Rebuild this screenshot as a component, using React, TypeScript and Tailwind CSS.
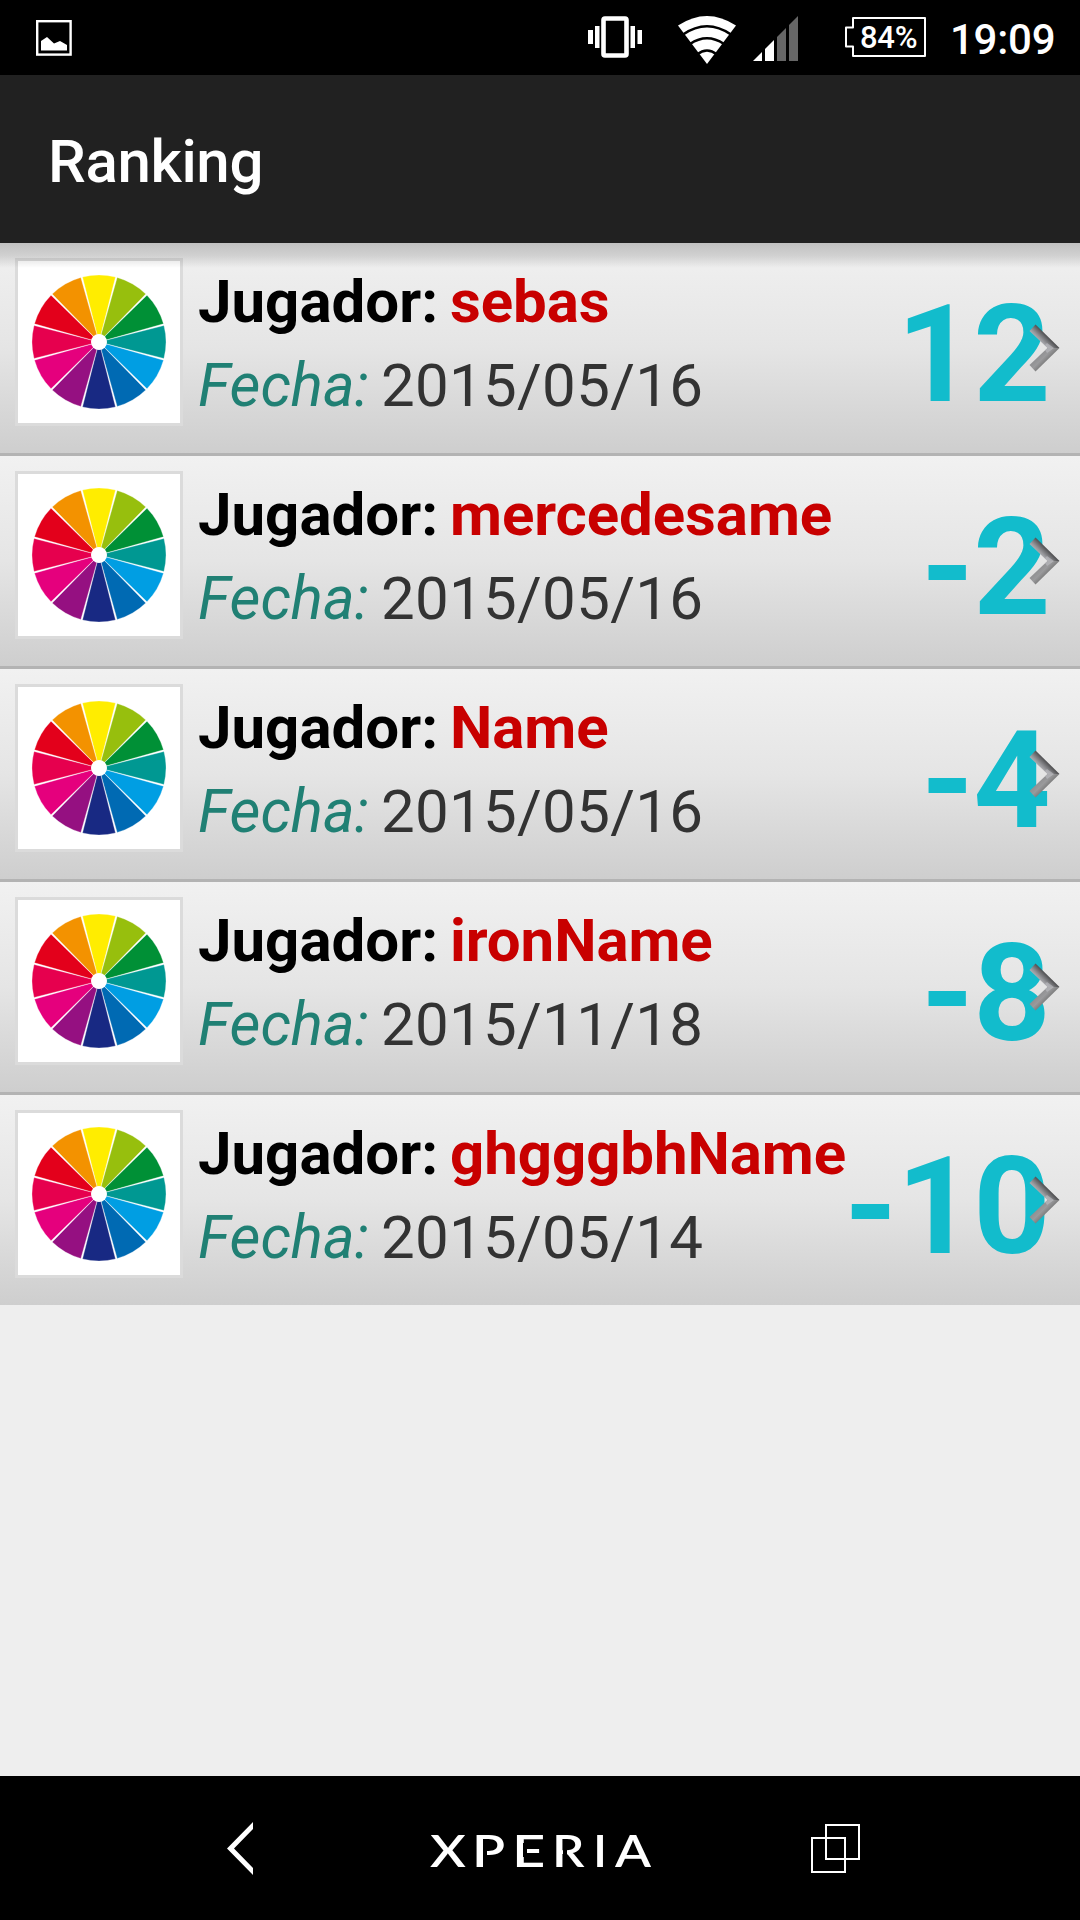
const wheelColors = [
  '#ffed00', '#97bf0d', '#009036', '#009892', '#009ee3', '#006ab3',
  '#182983', '#951081', '#e5007d', '#e6004e', '#e3001b', '#f39200',
];

const players = [
  { name: 'sebas', date: '2015/05/16', score: '12' },
  { name: 'mercedesame', date: '2015/05/16', score: '-2' },
  { name: 'Name', date: '2015/05/16', score: '-4' },
  { name: 'ironName', date: '2015/11/18', score: '-8' },
  { name: 'ghgggbhName', date: '2015/05/14', score: '-10' },
];

function wedge(i: number) {
  const r = 67;
  const a = ((i * 30 - 14.25) * Math.PI) / 180;
  const b = ((i * 30 + 14.25) * Math.PI) / 180;
  return `M0 0L${r * Math.sin(a)} ${-r * Math.cos(a)}A${r} ${r} 0 0 1 ${r * Math.sin(b)} ${-r * Math.cos(b)}Z`;
}

function Wheel() {
  return (
    <svg viewBox="-81 -81 162 162" className="size-full">
      {wheelColors.map((c, i) => (
        <path key={c} d={wedge(i)} fill={c} stroke="#fff" strokeWidth="0.3" />
      ))}
      <circle r="8" fill="#fff" />
    </svg>
  );
}

function Chevron() {
  return (
    <svg width="32" height="50" viewBox="0 0 32 50" className="absolute top-[80px] left-[1028px] blur-[0.6px]">
      <defs>
        <linearGradient id="up" x1="10" y1="20" x2="18" y2="12" gradientUnits="userSpaceOnUse">
          <stop offset="0" stopColor="#c4c4c8" />
          <stop offset="0.45" stopColor="#96969a" />
          <stop offset="1" stopColor="#505052" />
        </linearGradient>
        <linearGradient id="down" x1="12" y1="30" x2="20" y2="38" gradientUnits="userSpaceOnUse">
          <stop offset="0" stopColor="#8e8e90" />
          <stop offset="0.5" stopColor="#9a9a9c" />
          <stop offset="1" stopColor="#777" />
        </linearGradient>
      </defs>
      <path d="M7.500 1.500L31.500 25H19.500L1.500 8Z" fill="url(#up)" />
      <path d="M19.500 25H31.500L7.500 48.500L1.500 42Z" fill="url(#down)" />
      <path d="M19 20L26 25L19 30L17 27L20 25L17 22Z" fill="#c0c0c4" opacity="0.6" />
    </svg>
  );
}

function StatusBar() {
  return (
    <div className="flex h-[75px] bg-black pl-9">
      <svg width="36" height="36" viewBox="0 0 36 36" className="mt-5">
        <rect x="1.2" y="1.2" width="33.4" height="33.4" fill="none" stroke="#fff" strokeWidth="2.4" />
        <path d="M5 30.500V21L11 17L18 23.500L24 21L31 25V30.500Z" fill="#fff" />
      </svg>
      <svg width="54" height="44" viewBox="0 0 54 44" className="mt-[15px] ml-[516px]" fill="#fff">
        <rect x="0" y="15" width="5" height="14" />
        <rect x="7" y="11" width="4.500" height="22" />
        <rect x="15.500" y="3.500" width="23" height="37" rx="1.500" fill="none" stroke="#fff" strokeWidth="4.600" />
        <rect x="42.500" y="11" width="4.500" height="22" />
        <rect x="49.500" y="15" width="4.500" height="14" />
      </svg>
      <svg width="58" height="48" viewBox="0 0 58 48" className="mt-4 ml-9">
        <path d="M29 48L0 9.500Q29 -9.500 58 9.500Z" fill="#fff" />
        <g fill="none" stroke="#000" strokeWidth="2.600">
          <path d="M5 18.500Q29 2 53 18.500" />
          <path d="M12 28Q29 16.500 46 28" />
          <path d="M19 38.500Q29 30.500 39 38.500" />
        </g>
      </svg>
      <svg width="45" height="45" viewBox="0 0 45 45" className="mt-4 ml-[17px]">
        <path d="M0 45L9 36V45Z" fill="#fff" />
        <path d="M12 33L21 24V45H12Z" fill="#fff" />
        <path d="M24 21L33 12V45H24Z" fill="#666" />
        <path d="M36 9L45 0V45H36Z" fill="#666" />
      </svg>
      <div className="relative mt-[17px] ml-[47px] h-10 w-[81px]">
        <svg width="81" height="40" viewBox="0 0 81 40" className="absolute inset-0">
          <path d="M8 1H80V39H8V29.500H1V10.500H8Z" fill="none" stroke="#fff" strokeWidth="2" strokeLinejoin="round" />
        </svg>
        <span className="absolute top-[3px] left-[15px] text-[31px] leading-9 font-medium tracking-[-0.3px] text-white">84%</span>
      </div>
      <span className="mt-[15px] ml-[24px] text-[42px] leading-[50px] font-medium tracking-[-0.25px] text-white">19:09</span>
    </div>
  );
}

const glyph = "block w-max origin-left font-['Lato',sans-serif] text-[44.500px] leading-[48px] font-semibold text-white";

function Wordmark() {
  return (
    <div className="mt-[50px] ml-[177px] flex h-[48px] w-[221px]">
      <div className="w-[47px] shrink-0">
        <span className={`${glyph} scale-x-[1.22]`}>X</span>
      </div>
      <div className="relative w-[40px] shrink-0">
        <span className={`${glyph} -ml-[5px] scale-x-[1.22]`}>P</span>
        <i className="absolute top-[18px] left-[6px] h-[18px] w-[4px] bg-black" />
      </div>
      <div className="relative w-[40px] shrink-0">
        <span className={`${glyph} -ml-[5px] scale-x-[1.3]`}>E</span>
        <i className="absolute top-[17px] left-[6px] h-[14px] w-[4px] bg-black" />
      </div>
      <div className="relative w-[41px] shrink-0">
        <span className={`${glyph} -ml-[5px] scale-x-[1.15]`}>R</span>
        <i className="absolute top-[18px] left-[6px] h-[18px] w-[4px] bg-black" />
      </div>
      <div className="w-[17px] shrink-0">
        <span className={`${glyph} -ml-[5px] scale-x-[1.1]`}>I</span>
      </div>
      <div className="w-[36px] shrink-0">
        <span className={`${glyph} scale-x-[1.18]`}>A</span>
      </div>
    </div>
  );
}

function NavBar() {
  return (
    <div className="flex h-[144px] bg-black">
      <svg width="26" height="54" viewBox="0 0 26 54" className="mt-[45px] ml-[227px]">
        <path d="M26 1V8L7 27.500L26 47V54L0 27.500Z" fill="#fff" />
      </svg>
      <Wordmark />
      <svg width="50" height="50" viewBox="0 0 50 50" className="mt-12 ml-[160px]" fill="none" stroke="#fff" strokeWidth="2">
        <rect x="15" y="1" width="33" height="34" />
        <rect x="1" y="14" width="33" height="34" />
      </svg>
    </div>
  );
}

export default function App() {
  return (
    <div className="flex h-[1920px] w-[1080px] flex-col overflow-hidden bg-[#eee] font-['Roboto',sans-serif]">
      <StatusBar />
      <header className="flex h-[168px] items-center bg-[#212121] pt-[5px] pl-12">
        <h1 className="text-[60px] leading-[70px] font-medium tracking-[-0.35px] text-white">Ranking</h1>
      </header>
      <main className="relative flex-1">
        <ul className="divide-y-[3px] divide-[#b3b3b3]">
          {players.map((p, i) => (
            <li key={i} className="relative h-[213px] bg-linear-to-b from-[#f1f1f1] via-[#e5e5e5] to-[#cecece] last:h-[210px]">
              <div className="flex pt-[15px] pl-[15px]">
                <div className="size-[168px] border-[3px] border-[#dbdbdb] bg-white">
                  <Wheel />
                </div>
                <div className="ml-[15px] pt-2 text-[60px] leading-[72px]">
                  <div className="flex font-bold">
                    <span className="text-black">Jugador:</span>
                    <span className="ml-3 tracking-[-0.08px] text-[#c80000]">{p.name}</span>
                  </div>
                  <div className="mt-3 flex">
                    <span className="text-[#208074] italic">Fecha:</span>
                    <span className="ml-3 tracking-[0.3px] text-[#333]">{p.date}</span>
                  </div>
                </div>
              </div>
              <span className="absolute top-[32px] right-[30px] text-[135px] leading-[160px] font-bold tracking-[-0.8px] text-[#12bccc]">{p.score}</span>
              <Chevron />
            </li>
          ))}
        </ul>
        <div className="absolute inset-x-0 top-0 h-[25px] bg-linear-to-b from-black/20 via-black/13 to-transparent" />
      </main>
      <NavBar />
    </div>
  );
}
